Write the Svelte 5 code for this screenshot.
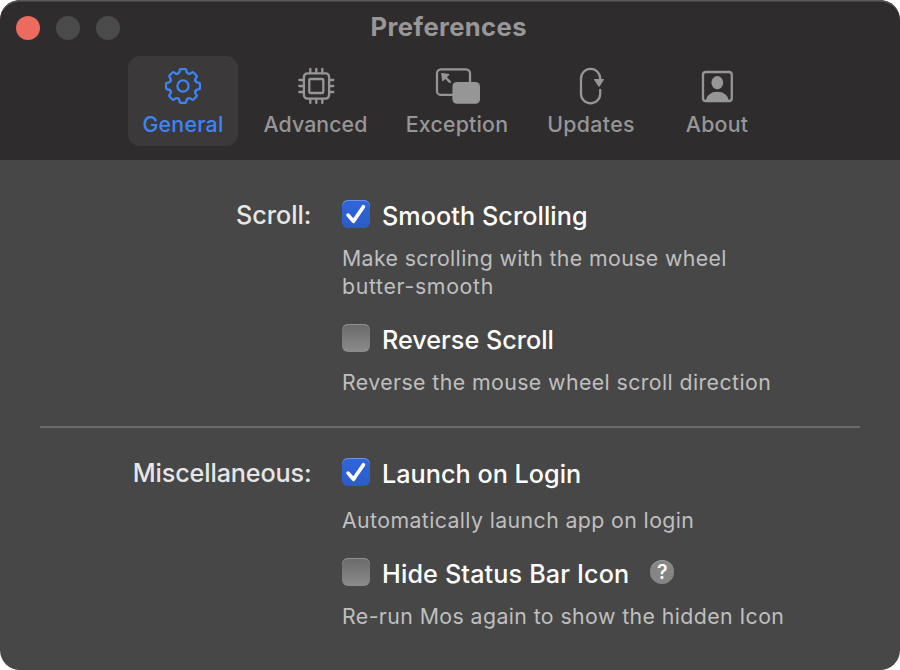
<script>
  const tabs = [
    { id: 'general', label: 'General', width: 110, spacing: 0.25 },
    { id: 'advanced', label: 'Advanced', width: 135, spacing: 0.08 },
    { id: 'exception', label: 'Exception', width: 128, spacing: 0.22 },
    { id: 'updates', label: 'Updates', width: 120, spacing: 0.35 },
    { id: 'about', label: 'About', width: 112, spacing: 0.25 }
  ];
  let active = $state('general');

  let sections = $state([
    {
      title: 'Scroll:', spacing: 0,
      options: [
        { label: 'Smooth Scrolling', spacing: 0.06, on: true, gap: 16, lines: [['Make scrolling with the mouse wheel', 0.38], ['butter-smooth', 0.67]] },
        { label: 'Reverse Scroll', spacing: 0, on: false, gap: 16, lines: [['Reverse the mouse wheel scroll direction', 0.41]] }
      ]
    },
    {
      title: 'Miscellaneous:', spacing: -0.14,
      options: [
        { label: 'Launch on Login', spacing: 0.02, on: true, gap: 20, lines: [['Automatically launch app on login', 0.39]] },
        { label: 'Hide Status Bar Icon', spacing: 0.14, on: false, gap: 16, help: true, lines: [['Re-run Mos again to show the hidden Icon', 0.41]] }
      ]
    }
  ]);

  // Gear outline: eight rounded teeth around the origin.
  function gearPath() {
    const p = (r, deg) => {
      const a = (deg - 90) * Math.PI / 180;
      return `${(r * Math.cos(a)).toFixed(2)} ${(r * Math.sin(a)).toFixed(2)}`;
    };
    let d = '';
    for (let i = 0; i < 8; i++) {
      const c = i * 45;
      d += `${i ? 'L' : 'M'}${p(14.4, c - 14.5)}L${p(16, c - 12)}Q${p(17.3, c - 10.5)} ${p(17.1, c - 7)}`;
      d += `L${p(17.1, c + 7)}Q${p(17.3, c + 10.5)} ${p(16, c + 12)}L${p(14.4, c + 14.5)}`;
      d += `Q${p(12.4, c + 22.5)} ${p(14.4, c + 30.5)}`;
    }
    return d + 'Z';
  }
  const gear = gearPath();
</script>

<main class="window">
  <header>
    <div class="titlebar">
      <div class="lights"><i class="close"></i><i></i><i></i></div>
      <h1>Preferences</h1>
    </div>
    <nav>
      {#each tabs as tab}
        <button class="tab" class:active={active === tab.id} style:width="{tab.width}px" onclick={() => (active = tab.id)}>
          <svg width="48" height="40" viewBox="-24 -20 48 40" fill="none" stroke="currentColor" stroke-width="2.3">
            {#if tab.id === 'general'}
              <path d={gear} stroke-linejoin="round" />
              <circle r="5.6" />
            {:else if tab.id === 'advanced'}
              <g transform="translate(.3 0)">
                <rect x="-12.4" y="-12.6" width="25.2" height="25.2" rx="3.5" />
                <rect x="-7" y="-7" width="14" height="14" rx="1" />
                <path stroke-linecap="round" d="M-6-17v4M0-17v4M6-17v4M-6 17v-4M0 17v-4M6 17v-4M-17-6h4M-17 0h4M-17 6h4M17-6h-4M17 0h-4M17 6h-4" />
              </g>
            {:else if tab.id === 'exception'}
              <rect x="-20" y="-16.7" width="33" height="25.6" rx="4" />
              <rect x="-4.6" y="-4" width="27.6" height="21.8" rx="4.5" fill="currentColor" stroke="none" />
              <path d="M-12.5-9.5l5.3 5.3" stroke-width="2.4" stroke-linecap="round" />
              <path d="M-15.2-12.4l7 .9-6 6z" fill="currentColor" stroke-width="1.2" stroke-linejoin="round" />
            {:else if tab.id === 'updates'}
              <path d="M9.2-6V-7.5A9.6 9.6 0 0 0-10-7.5V7.7A9.6 9.6 0 0 0 9.2 7.7V4" stroke-linecap="round" />
              <path d="M3.7-6.4h8.6L8 .2z" fill="currentColor" stroke-width="1.2" stroke-linejoin="round" />
            {:else}
              <rect x="-14" y="-14" width="28.8" height="29" rx="2.8" />
              <ellipse cx=".3" cy="-3.4" rx="5.9" ry="6.6" fill="currentColor" stroke="none" />
              <path d="M-11.2 15C-10.4 9.2-6 5.8.3 5.8S11 9.2 11.8 15z" fill="currentColor" stroke="none" />
            {/if}
          </svg>
          <span style:letter-spacing="{tab.spacing}px">{tab.label}</span>
        </button>
      {/each}
    </nav>
  </header>

  <div class="content">
    {#each sections as section}
      <section>
        <h2><span style:letter-spacing="{section.spacing}px">{section.title}</span></h2>
        <div class="options">
          {#each section.options as option}
            <div class="option">
              <div class="row">
                <label>
                  <span class="box" class:on={option.on}>
                    <input type="checkbox" bind:checked={option.on} />
                    {#if option.on}
                      <svg width="28" height="28" viewBox="0 0 28 28"><path d="M6.1 15.1l5.4 6.2L21.4 6.8" fill="none" stroke="#fff" stroke-width="3.7" stroke-linecap="round" stroke-linejoin="round" /></svg>
                    {/if}
                  </span>
                  <span class="name" style:letter-spacing="{option.spacing}px">{option.label}</span>
                </label>
                {#if option.help}<button class="help" aria-label="Help">?</button>{/if}
              </div>
              <div class="desc" style:margin-top="{option.gap}px">
                {#each option.lines as [line, spacing]}
                  <p><span style:letter-spacing="{spacing}px">{line}</span></p>
                {/each}
              </div>
            </div>
          {/each}
        </div>
      </section>
    {/each}
  </div>
</main>

<style>
  :global(body) { background: #fff; }
  .window {
    width: 900px; height: 670px; box-sizing: border-box; overflow: hidden;
    border-radius: 20px; background: #474747; white-space: nowrap;
    font-family: Inter, "Liberation Sans", sans-serif;
  }
  header { height: 160px; background: #2f2c2d; box-shadow: inset 0 2px 0 -0.5px #5b595a; border-radius: 20px 20px 0 0; }
  .titlebar { height: 56px; display: grid; grid-template-columns: 1fr auto 1fr; }
  .lights { display: flex; gap: 16px; padding: 16px 0 0 16px; }
  .lights i { width: 24px; height: 24px; border-radius: 50%; background: #4b4b4b; }
  .lights .close { background: #ed6a5e; }
  h1 { margin: 0; padding: 12px 2.5px 0 0; font-size: 25.6px; line-height: 30px; font-weight: 700; letter-spacing: 0.38px; color: #989697; }
  nav { display: flex; gap: 10px; padding-left: 128px; }
  button { border: 0; padding: 0; font: inherit; background: none; }
  .tab {
    height: 90px; border-radius: 12px; color: #979697; padding-top: 10px;
    display: flex; flex-direction: column; align-items: center;
    font-size: 21.3px; line-height: 28px; font-weight: 450;
  }
  .tab svg { flex: none; margin-bottom: 4px; }
  .tab.active { background: #3c393a; color: #3d84f7; }
  .content { padding: 40px 40px 0; }
  section { display: flex; gap: 30.5px; }
  section + section { border-top: 2px solid #6b6b6b; margin-top: 30px; padding-top: 30px; }
  h2 { margin: 0; padding-top: 1px; width: 271.5px; text-align: right; font-size: 25.2px; line-height: 28px; font-weight: 450; color: #e6e6e6; }
  .options { display: flex; flex-direction: column; gap: 24px; }
  .row, label { display: flex; height: 28px; }
  .row { gap: 21px; }
  label { gap: 12px; }
  .box {
    width: 28px; height: 28px; border-radius: 6px; display: grid;
    background: linear-gradient(#6a6a6a, #8b8b8b); box-shadow: inset 0 1px 0 #919191;
  }
  .box.on { background: linear-gradient(#3166dc, #2a5bc8); box-shadow: inset 0 1px 0 #6d92e5; }
  .box input, .box svg { grid-area: 1 / 1; }
  input { appearance: none; margin: 0; width: 28px; height: 28px; }
  .name { padding-top: 2px; font-size: 25.2px; line-height: 28px; font-weight: 500; color: #fff; }
  .help {
    width: 24px; height: 24px; margin-top: 2px; border-radius: 50%; background: #858585;
    box-shadow: inset 0 1px 0 #999; color: #fff; font-size: 19.5px; line-height: 24px; font-weight: 600;
  }
  .desc { font-size: 21.3px; line-height: 28px; font-weight: 420; color: #bfbfbf; }
  p { margin: 0; }
</style>
